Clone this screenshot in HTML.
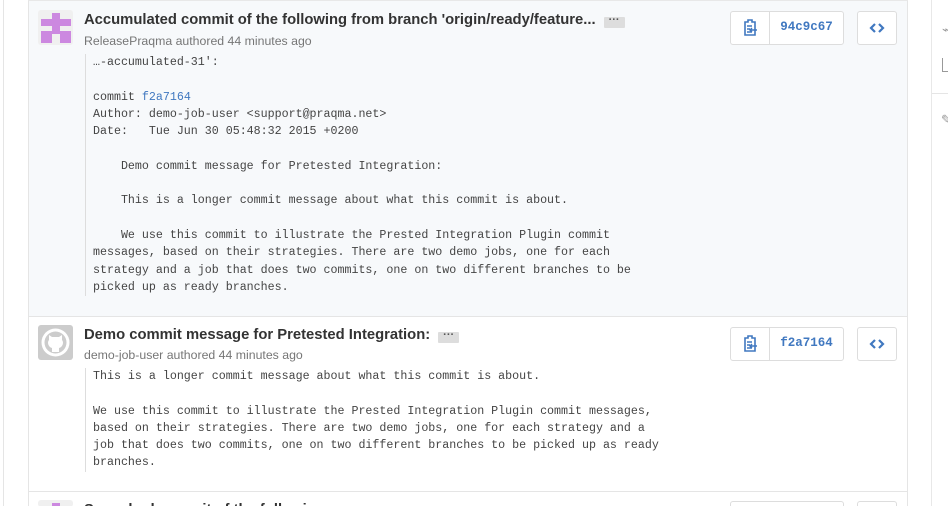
<!DOCTYPE html>
<html><head><meta charset="utf-8"><style>
*{box-sizing:border-box;margin:0;padding:0}
html,body{width:948px;height:506px;overflow:hidden}
body{background:#fff;font-family:"Liberation Sans",sans-serif;position:relative}
.lrule{position:absolute;left:3px;top:0;width:1px;height:506px;background:#e5e5e5}
.list{position:absolute;left:28px;top:0;width:880px;height:506px;border-left:1px solid #e5e5e5;border-right:1px solid #e5e5e5;border-top:1px solid #e8e8e8;overflow:hidden}
.item{position:absolute;left:0;width:878px;border-bottom:1px solid #e5e5e5;overflow:hidden}
.av{position:absolute;left:9px;width:35px;height:35px;border-radius:3px;overflow:hidden}
.title{position:absolute;left:55px;font-weight:bold;font-size:14.8px;color:#333;white-space:nowrap}
.tag{display:inline-block;background:#ddd;width:21px;height:11px;margin-left:8px;vertical-align:1px;border-radius:1px;font-size:11px;font-weight:bold;line-height:7px;text-align:center;color:#555}
.meta{position:absolute;left:55px;font-size:12.3px;color:#767676}
pre{position:absolute;left:56px;border-left:1px solid #ddd;padding-left:7px;font-family:"Liberation Mono",monospace;font-size:11.65px;line-height:17.3px;color:#444}
pre a{color:#4078c0}
.grp{position:absolute;left:701px;width:114px;height:34px;border:1px solid #ddd;border-radius:3px;background:#fff}
.grp .cp{position:absolute;left:0;top:0;width:39px;height:32px;border-right:1px solid #ddd}
.grp .sha{position:absolute;left:39px;top:0;width:73px;height:32px;text-align:center;line-height:31px;font-family:"Liberation Mono",monospace;font-weight:bold;font-size:12.5px;color:#4078c0}
.cb{position:absolute;left:828px;width:40px;height:34px;border:1px solid #ddd;border-radius:3px;background:#fff}
.side{position:absolute;left:931px;top:0;width:17px;height:506px;border-left:1px solid #e8e8e8;overflow:hidden}
</style></head><body>
<div class="lrule"></div>
<div class="side">
<div style="position:absolute;top:93px;left:0;width:17px;border-top:1px solid #e5e5e5"></div>
<div style="position:absolute;top:22px;left:10px;color:#999;font-size:13px">⌁</div>
<div style="position:absolute;top:58px;left:10px;width:7px;height:14px;border-left:1px solid #999;border-bottom:1px solid #999"></div>
<div style="position:absolute;top:112px;left:9px;color:#999;font-size:13px">✎</div>
</div>
<div class="list">
<div class="item" style="top:0;height:316px;background:#f7f9fb">
<div class="av" style="top:9px;background:#f0f0f0">
<div style="position:absolute;left:14px;top:3px;width:8px;height:21px;background:#cc88e0"></div>
<div style="position:absolute;left:3px;top:9px;width:30px;height:7px;background:#cc88e0"></div>
<div style="position:absolute;left:3px;top:21px;width:11px;height:12px;background:#cc88e0"></div>
<div style="position:absolute;left:22px;top:21px;width:11px;height:12px;background:#cc88e0"></div>
</div>
<div class="title" style="top:11px">Accumulated commit of the following from branch 'origin/ready/feature...<span class="tag">···</span></div>
<div class="meta" style="top:33px">ReleasePraqma authored 44 minutes ago</div>
<pre style="top:53px">…-accumulated-31':

commit <a>f2a7164</a>
Author: demo-job-user &lt;support@praqma.net&gt;
Date:   Tue Jun 30 05:48:32 2015 +0200

    Demo commit message for Pretested Integration:

    This is a longer commit message about what this commit is about.

    We use this commit to illustrate the Prested Integration Plugin commit
messages, based on their strategies. There are two demo jobs, one for each
strategy and a job that does two commits, one on two different branches to be
picked up as ready branches.</pre>
<div class="grp" style="top:10px"><div class="cp"><svg width="39" height="32" viewBox="0 0 39 32"><path d="M14 10h3v-2h4v2h3v13h-10z" fill="none" stroke="#4078c0" stroke-width="1.6"/><path d="M16 14h5M16 17h3M16 20h5M19 18h7M21 16l-2 2 2 2" stroke="#4078c0" stroke-width="1.4" fill="none"/></svg></div><div class="sha">94c9c67</div></div>
<div class="cb" style="top:10px"><svg width="38" height="32" viewBox="0 0 38 32"><path d="M17 12l-4 4 4 4M21 12l4 4-4 4" fill="none" stroke="#4078c0" stroke-width="2.2"/></svg></div>
</div>
<div class="item" style="top:316px;height:175px;background:#fff">
<div class="av" style="top:8px;background:#ccc">
<svg width="35" height="35" viewBox="0 0 35 35"><circle cx="17.5" cy="17.5" r="14" fill="#fff"/><circle cx="17.5" cy="17.5" r="11" fill="#ccc"/><path d="M11 10l3 2h7l3-2v5c2 2 1 7-3 8v4h-7v-4c-4-1-5-6-3-8z" fill="#fff"/></svg>
</div>
<div class="title" style="top:10px">Demo commit message for Pretested Integration:<span class="tag">···</span></div>
<div class="meta" style="top:31px">demo-job-user authored 44 minutes ago</div>
<pre style="top:51px">This is a longer commit message about what this commit is about.

We use this commit to illustrate the Prested Integration Plugin commit messages,
based on their strategies. There are two demo jobs, one for each strategy and a
job that does two commits, one on two different branches to be picked up as ready
branches.</pre>
<div class="grp" style="top:10px"><div class="cp"><svg width="39" height="32" viewBox="0 0 39 32"><path d="M14 10h3v-2h4v2h3v13h-10z" fill="none" stroke="#4078c0" stroke-width="1.6"/><path d="M16 14h5M16 17h3M16 20h5M19 18h7M21 16l-2 2 2 2" stroke="#4078c0" stroke-width="1.4" fill="none"/></svg></div><div class="sha">f2a7164</div></div>
<div class="cb" style="top:10px"><svg width="38" height="32" viewBox="0 0 38 32"><path d="M17 12l-4 4 4 4M21 12l4 4-4 4" fill="none" stroke="#4078c0" stroke-width="2.2"/></svg></div>
</div>
<div class="item" style="top:491px;height:15px;background:#fff;border-bottom:none">
<div class="av" style="top:8px;height:7px;background:#f0f0f0"><div style="position:absolute;left:14px;top:3px;width:8px;height:4px;background:#cc88e0"></div></div>
<div class="title" style="top:10px">Squashed commit of the following:<span class="tag">···</span></div>
<div class="grp" style="top:9px"></div>
<div class="cb" style="top:9px"></div>
</div>
</div>
</body></html>
